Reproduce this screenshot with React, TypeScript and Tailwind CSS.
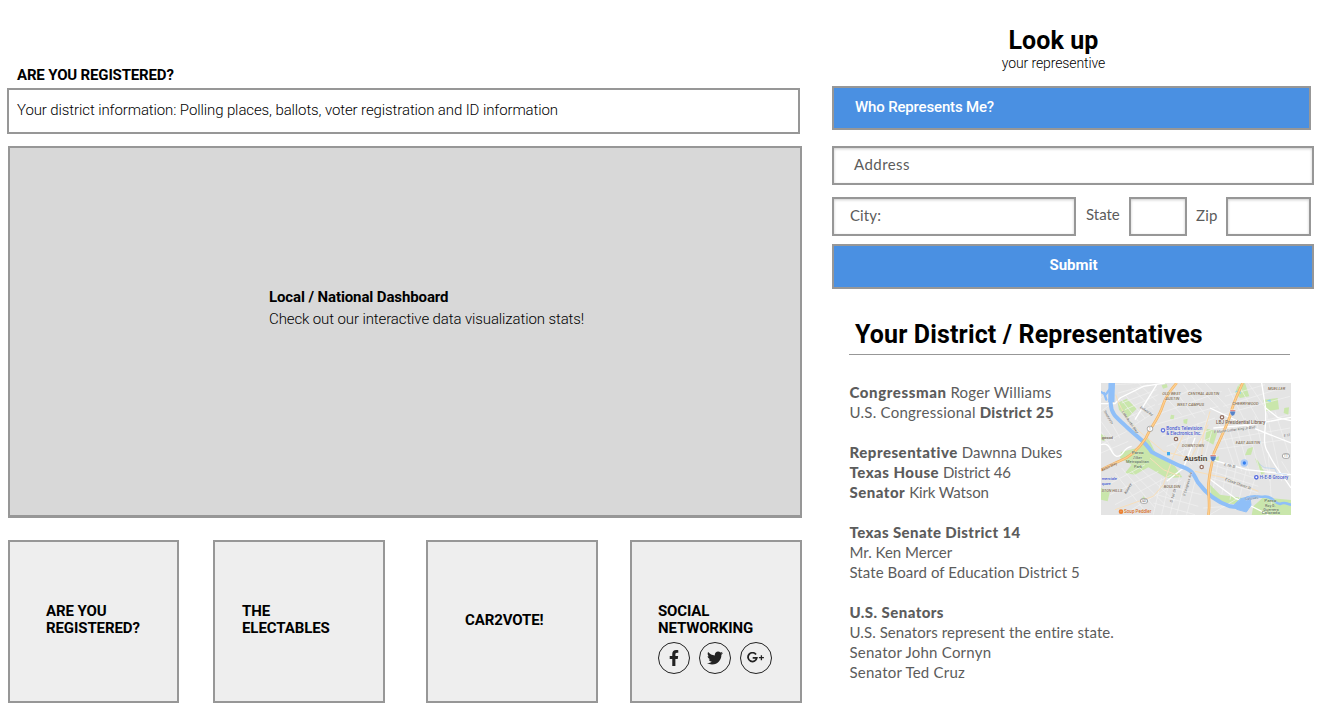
import type { ReactNode } from "react";
import { FaFacebookF, FaTwitter } from "react-icons/fa";

function Card({ className, children }: { className: string; children: ReactNode }) {
  return (
    <div className={`h-[163px] shrink-0 border-2 border-[#979797] bg-[#eeeeee] pt-[61px] text-[15px] leading-[17px] font-bold ${className}`}>
      {children}
    </div>
  );
}

function Circle({ children }: { children: ReactNode }) {
  return (
    <span className="flex size-8 shrink-0 items-center justify-center rounded-full border border-[#222] text-[#222]">
      {children}
    </span>
  );
}

const minorStreets = [
  "M18 60L60 20M18 100L48 78M75 60L130 130M90 50L150 120M110 30L175 95M130 15L185 70M60 20L150 15M70 45L160 20M80 75L185 35",
  "M90 95L190 50M100 118L180 80M120 140L175 105M205 50L260 110M235 30L300 120M265 20L330 110M300 15L375 95M330 15L400 90",
  "M190 80L300 30M185 110L380 40M180 140L370 85M200 175L360 120M215 205L350 155M225 235L345 180",
  "M400 30L450 130M430 20L490 125M460 15L525 110M390 55L510 20M385 85L560 30M380 110L585 55M365 160L585 110M360 190L585 150M355 215L570 185",
  "M370 130L420 270M395 125L440 280M420 130L465 290M450 120L500 300M480 115L525 310M515 105L560 310M540 100L585 240",
  "M230 195L290 260M250 180L320 270M285 160L260 240M310 135L285 245M340 110L300 250M350 160L320 270",
  "M60 285L150 400M80 270L180 390M110 280L210 380M135 270L240 370M40 320L150 260M45 350L190 280M60 380L230 290M110 395L260 305",
  "M200 300L175 410M225 300L200 410M255 290L225 410M270 310L245 410M300 310L275 410M195 320L320 350M185 350L310 385M175 375L300 410",
  "M350 260L480 300M350 280L490 325M350 300L490 345M370 250L355 330M400 255L380 350M425 260L405 365M455 270L430 375M485 285L455 380",
  "M18 130L60 190M18 160L55 220M35 110L75 180M18 200L95 160M18 225L100 190M325 390L400 385M345 410L430 360M500 270L585 300M520 230L530 380M560 250L585 290",
];

function Label({ x, y, children, c = "#7d6a50", s = 13, r = 0, i = true, w, b = false }: {
  x: number; y: number; children: string; c?: string; s?: number; r?: number; i?: boolean; w: number; b?: boolean;
}) {
  return (
    <text x={x} y={y} fill={c} fontSize={s} fontStyle={i ? "italic" : "normal"} textLength={w} lengthAdjust="spacingAndGlyphs"
      fontWeight={b ? 700 : 500} transform={`rotate(${r} ${x} ${y})`} stroke="#f3f3f1" strokeWidth="1.5" strokeOpacity="0.7" paintOrder="stroke">
      {children}
    </text>
  );
}

function AustinMap() {
  return (
    <svg viewBox="18 15 570 396" width="190" height="132" className="block shrink-0 overflow-hidden" fontFamily="Roboto, sans-serif">
      <rect x="18" y="15" width="570" height="396" fill="#e4e4e4" />
      <g fill="#c9e6ab">
        <path d="M68 75L95 62L125 92L95 122L72 95Z" />
        <path d="M78 222L135 208L160 180L185 232L240 265L262 298L215 300L160 268L120 290L90 285L110 260L75 240Z" />
        <path d="M430 20L450 15L463 55L435 60L420 45Z" />
        <path d="M505 65L548 60L552 94L512 100Z" />
        <path d="M335 152L368 160L355 200L330 185Z" />
        <path d="M475 385L505 358L588 366V411H470Z" />
        <path d="M345 320L375 350L445 360L440 380L390 376L348 350Z" />
        <path d="M18 330L45 340L38 370L18 365ZM145 355L160 370L135 372ZM355 240L372 235L370 250L352 252ZM458 212L475 206L468 230L450 232ZM228 110L238 112L236 125L225 122ZM480 240L490 250L510 285L498 290Z" />
        <path d="M200 22L215 18L218 28L204 32ZM18 168L32 175L28 190L18 186ZM265 125L278 122L276 138L266 136ZM568 90L582 88L580 110L566 105Z" />
      </g>
      <g fill="none" stroke="#f1f1f1" strokeWidth="2">
        {minorStreets.map((d) => <path key={d} d={d} />)}
      </g>
      <g fill="none" stroke="#ffffff" strokeWidth="4">
        <path d="M18 77H60L75 60L145 25L210 15M120 125L185 20M18 200C50 190 45 230 65 235C90 235 80 210 110 205" />
        <path d="M345 90L450 140L588 195M350 245L455 275L588 290M510 85C520 140 495 190 520 225C540 270 560 285 588 330" />
        <path d="M500 15L512 90L550 120L588 128M355 150L470 140L588 118M340 300L420 360L520 410M215 310L265 270L300 180" />
      </g>
      <g fill="none" stroke="#f8dfba" strokeWidth="3">
        <path d="M62 50C80 110 120 150 150 175L205 220L265 235L345 250" />
        <path d="M60 395L125 372L175 355L205 320L235 235L265 170" />
        <path d="M165 240L205 275L255 295M320 235L325 170L345 100M285 245L340 140M300 280L390 300L490 340" />
      </g>
      <g fill="none" stroke="#8fbff8" strokeLinejoin="round" strokeLinecap="round">
        <path d="M54 15C52 40 48 55 47 75C48 115 75 125 95 147C130 180 150 190 170 222C200 238 225 250 255 264C290 275 295 285 308 312C330 342 365 372 405 385C420 388 435 390 445 382" strokeWidth="12" />
        <path d="M50 15L49 72" strokeWidth="19" strokeLinecap="butt" />
        <path d="M18 42L32 50L43 35M27 45L34 65" strokeWidth="7" />
        <path d="M455 360C475 350 490 358 510 356C535 355 535 375 555 378C572 370 572 378 588 380" strokeWidth="8" />
        <path d="M438 362L465 355L468 382L454 402L425 394L415 384Z" fill="#8fbff8" strokeWidth="3" />
        <path d="M492 257L508 269L540 272L545 285L575 290" strokeWidth="2" strokeOpacity="0.6" />
      </g>
      <path d="M420 40L436 36L438 48ZM515 68L526 64L528 72Z" fill="#8fcff8" />
      <g fill="none" stroke="#f0b467" strokeWidth="8">
        <path d="M245 15C220 45 210 60 200 92C185 130 165 150 153 180C130 215 100 240 72 250C50 260 38 266 18 276" />
        <path d="M443 15C425 55 412 80 405 115C390 155 372 190 357 225C350 265 340 290 340 335C342 370 345 385 340 411" />
      </g>
      <g fill="none" stroke="#ffcf8e" strokeWidth="4">
        <path d="M245 15C220 45 210 60 200 92C185 130 165 150 153 180C130 215 100 240 72 250C50 260 38 266 18 276" />
        <path d="M443 15C425 55 412 80 405 115C390 155 372 190 357 225C350 265 340 290 340 335C342 370 345 385 340 411" />
      </g>
      <g fill="#ffffff" stroke="#888" strokeWidth="2">
        <rect x="157" y="145" width="16" height="15" rx="6" />
        <rect x="136" y="362" width="22" height="14" rx="7" />
        <rect x="562" y="227" width="22" height="14" rx="7" />
      </g>
      <g fontSize="9" fill="#666">
        <text x="162" y="156">1</text>
        <text x="139" y="373">343</text>
        <text x="566" y="238">111</text>
      </g>
      <g stroke="#ffffff" strokeWidth="1">
        <path d="M405 96H421V104Q420 112 413 114Q406 112 405 104ZM346 231H363V240Q361 249 354 251Q347 249 346 240Z" fill="#5683c9" />
        <path d="M405 96H421V100H405ZM346 231H363V235H346Z" fill="#d66b65" />
      </g>
      <g fill="#ffffff" strokeWidth="4">
        <circle cx="381" cy="118" r="5" stroke="#936e60" />
        <circle cx="243" cy="183" r="5" stroke="#936e60" />
        <circle cx="320" cy="267" r="5" stroke="#936e60" />
        <circle cx="204" cy="157" r="5" stroke="#6577df" />
        <circle cx="484" cy="298" r="5" stroke="#5368df" />
        <circle cx="78" cy="401" r="4" stroke="#ed8132" strokeWidth="6" />
      </g>
      <circle cx="448" cy="255" r="11" fill="#a9c9f7" />
      <circle cx="448" cy="255" r="5" fill="#347ff0" />
      <rect x="216" y="222" width="9" height="10" fill="#40aaf0" />
      <Label x={202} y={51} w={56}>OLD WEST</Label>
      <Label x={211} y={66} w={42}>AUSTIN</Label>
      <Label x={279} y={51} w={94}>CENTRAL AUSTIN</Label>
      <Label x={246} y={83} w={81}>WEST CAMPUS</Label>
      <Label x={412} y={81} w={79}>CHERRYWOOD</Label>
      <Label x={519} y={35} w={52}>MUELLER</Label>
      <Label x={422} y={198} w={73}>EAST AUSTIN</Label>
      <Label x={261} y={208} w={67}>DOWNTOWN</Label>
      <Label x={206} y={329} w={50}>BOULDIN</Label>
      <Label x={20} y={342} w={62}>STON HILLS</Label>
      <Label x={363} y={139} w={148} s={15} c="#735c4e" i={false}>LBJ Presidential Library</Label>
      <Label x={214} y={155} w={108} s={15} c="#4357cf" i={false}>Bond's Television</Label>
      <Label x={214} y={171} w={105} s={15} c="#4357cf" i={false}>&amp; Electronics Inc.</Label>
      <Label x={266} y={249} w={71} s={19} c="#514a42" i={false} b>Austin</Label>
      <Label x={494} y={303} w={86} s={15} c="#4357cf" i={false}>H-E-B Grocery</Label>
      <Label x={87} y={406} w={82} s={15} c="#d36b22" i={false}>Soup Peddler</Label>
      <Label x={20} y={183} w={34} c="#6d5f4d" i={false}>gwood</Label>
      <Label x={20} y={305} w={46} s={13} c="#4357cf" i={false}>merciale</Label>
      <Label x={20} y={321} w={27} s={13} c="#4357cf" i={false}>quare</Label>
      <Label x={110} y={228} w={36} c="#5d7a52" i={false}>Parco</Label>
      <Label x={114} y={242} w={27} c="#5d7a52" i={false}>Zilker</Label>
      <Label x={93} y={256} w={69} c="#5d7a52" i={false}>Metropolitan</Label>
      <Label x={117} y={270} w={24} c="#5d7a52" i={false}>Park</Label>
      <Label x={508} y={372} w={36} c="#5d7a52" i={false}>Parco</Label>
      <Label x={510} y={386} w={32} c="#5d7a52" i={false}>Roy G.</Label>
      <Label x={505} y={398} w={46} s={12} c="#5d7a52" i={false}>Guerrero</Label>
      <Label x={500} y={408} w={55} s={10} c="#5d7a52" i={false}>Colorado</Label>
      <Label x={358} y={166} w={124} s={11} r={-7} c="#777">E Martin Luther King Jr Blvd</Label>
      <Label x={387} y={264} w={34} s={11} r={10} c="#777">E 7th St</Label>
      <Label x={389} y={307} w={82} s={12} r={20} c="#777">E Cesar Chavez St</Label>
      <Label x={80} y={102} w={78} s={11} r={56} c="#777">Lake Austin Blvd</Label>
      <Label x={26} y={100} w={46} s={10} r={60} c="#777">Stratford Dr</Label>
      <Label x={134} y={90} w={44} s={10} r={34} c="#777">Enfield Rd</Label>
      <Label x={22} y={280} w={50} s={12} r={-25} c="#8a5524">Barton Skwy</Label>
      <Label x={232} y={374} w={42} s={11} r={-74} c="#777">S 1st St</Label>
      <Label x={270} y={355} w={75} s={11} r={-73} c="#777">S Congress Ave</Label>
      <Label x={94} y={349} w={35} s={11} r={-62} c="#777">Kinney</Label>
      <Label x={451} y={367} w={40} s={11} r={-8} c="#5579ad">Colorado</Label>
      <Label x={567} y={176} w={18} s={11} r={-5} c="#777">E 12</Label>
    </svg>
  );
}

export default function App() {
  return (
    <div className="flex h-[717px] w-[1331px] overflow-hidden bg-white font-[Roboto,sans-serif] text-black">
      <main className="w-[832px] shrink-0 pt-[65px] pl-[7px]">
        <h2 className="pl-[10px] text-[15px] leading-5 font-bold tracking-[-0.16px]">ARE YOU REGISTERED?</h2>
        <div className="mt-[3px] h-[46px] w-[793px] border-2 border-[#979797] pt-[10px] pl-[8px] text-[15px] leading-5 font-light tracking-[-0.105px]">
          Your district information: Polling places, ballots, voter registration and ID information
        </div>
        <section className="mt-3 ml-px h-[372px] w-[794px] border-2 border-b-3 border-[#979797] bg-[#d8d8d8] pt-[138px] pl-[259px] text-[15px] leading-[22px]">
          <h3 className="font-bold tracking-[-0.11px]">Local / National Dashboard</h3>
          <p className="font-light tracking-[-0.11px]">Check out our interactive data visualization stats!</p>
        </section>
        <div className="mt-[22px] ml-px flex">
          <Card className="w-[171px] pl-[36px] tracking-[-0.1px]">ARE YOU<br />REGISTERED?</Card>
          <Card className="ml-[34px] w-[172px] pl-[27px] tracking-[-0.08px]">THE<br />ELECTABLES</Card>
          <Card className="ml-[41px] w-[172px] pl-[37px] tracking-[-0.1px]"><p className="pt-[9px]">CAR2VOTE!</p></Card>
          <Card className="ml-8 w-[172px] pl-[26px] tracking-[-0.14px]">
            SOCIAL<br />NETWORKING
            <div className="-ml-[0.5px] mt-[4.5px] flex gap-[9px]">
              <Circle><FaFacebookF size={16} /></Circle>
              <Circle><FaTwitter size={16} /></Circle>
              <Circle>
                <svg width="18" height="12" viewBox="0 0 18 12" fill="none" stroke="currentColor" className="ml-px">
                  <path d="M9 2.5A4.4 4.4 0 1 0 9.8 5.8H5.7" strokeWidth="1.8" />
                  <path d="M14.4 3.2V8.2M11.9 5.7H16.9" strokeWidth="1.3" />
                </svg>
              </Circle>
            </div>
          </Card>
        </div>
      </main>

      <aside className="w-[482px] shrink-0 pt-[27px] font-[Lato,sans-serif] text-[15px] leading-5 text-[#5c5c5c]">
        <header className="w-[443px] text-center font-[Roboto,sans-serif] text-black">
          <h1 className="text-[25px] leading-[28px] font-bold tracking-[0.1px]">Look up</h1>
          <p className="-mt-px text-[14px] leading-[18px] font-light tracking-[-0.1px]">your representive</p>
        </header>
        <div className="mt-[14px] h-[44px] w-[479px] border-2 border-[#979797] bg-[#4a90e2] pt-[9px] pl-[21px] font-[Roboto,sans-serif] font-medium tracking-[-0.16px] text-white">
          Who Represents Me?
        </div>
        <div className="mt-4 h-[39px] border-2 border-[#979797] pt-[6px] pl-[20px] tracking-[0.45px] shadow-[inset_0_1px_3px_rgba(0,0,0,0.2)]">Address</div>
        <div className="mt-3 flex h-[39px]">
          <div className="w-[244px] border-2 border-[#979797] pt-[6px] pl-[16px] tracking-[0.1px] shadow-[inset_0_1px_3px_rgba(0,0,0,0.2)]">City:</div>
          <span className="w-[53px] pt-[7px] pl-[10px]">State</span>
          <div className="w-[58px] border-2 border-[#979797] shadow-[inset_0_1px_3px_rgba(0,0,0,0.2)]" />
          <span className="w-[39px] pt-[8px] pl-[9px] tracking-[0.2px]">Zip</span>
          <div className="w-[85px] border-2 border-[#979797] shadow-[inset_0_1px_3px_rgba(0,0,0,0.2)]" />
        </div>
        <button className="mt-2 flex h-[45px] w-[482px] justify-center border-2 border-[#979797] bg-[#4a90e2] pt-[9px] pl-px font-[Roboto,sans-serif] leading-5 font-bold text-white">
          Submit
        </button>
        <h2 className="mt-[31px] ml-[17px] h-[35px] w-[441px] border-b border-[#979797] pl-[6px] font-[Roboto,sans-serif] text-[25px] leading-[30px] font-bold tracking-[0.14px] text-black">
          Your District / Representatives
        </h2>
        <div className="mt-[28px] ml-[17px] flex">
          <div className="-mt-px w-[252px] shrink-0 pl-[0.5px] whitespace-nowrap">
            <p><b className="font-black tracking-[0.6px]">Congressman</b> <span className="tracking-[0.24px]">Roger Williams</span></p>
            <p><span className="tracking-[0.25px]">U.S. Congressional</span> <b className="font-black tracking-[0.3px]">District 25</b></p>
            <p className="mt-5"><b className="font-black tracking-[0.52px]">Representative</b> <span className="tracking-[0.09px]">Dawnna Dukes</span></p>
            <p><b className="font-black tracking-[0.48px]">Texas House</b> <span className="tracking-[-0.15px]">District 46</span></p>
            <p><b className="font-black tracking-[0.5px]">Senator</b> <span className="tracking-[-0.12px]">Kirk Watson</span></p>
            <p className="mt-5"><b className="font-black tracking-[0.4px]">Texas Senate District 14</b></p>
            <p>Mr. Ken Mercer</p>
            <p className="tracking-[0.07px]">State Board of Education District 5</p>
            <p className="mt-5"><b className="font-black tracking-[0.43px]">U.S. Senators</b></p>
            <p className="tracking-[0.08px]">U.S. Senators represent the entire state.</p>
            <p className="tracking-[0.23px]">Senator John Cornyn</p>
            <p className="tracking-[0.23px]">Senator Ted Cruz</p>
          </div>
          <AustinMap />
        </div>
      </aside>
    </div>
  );
}
